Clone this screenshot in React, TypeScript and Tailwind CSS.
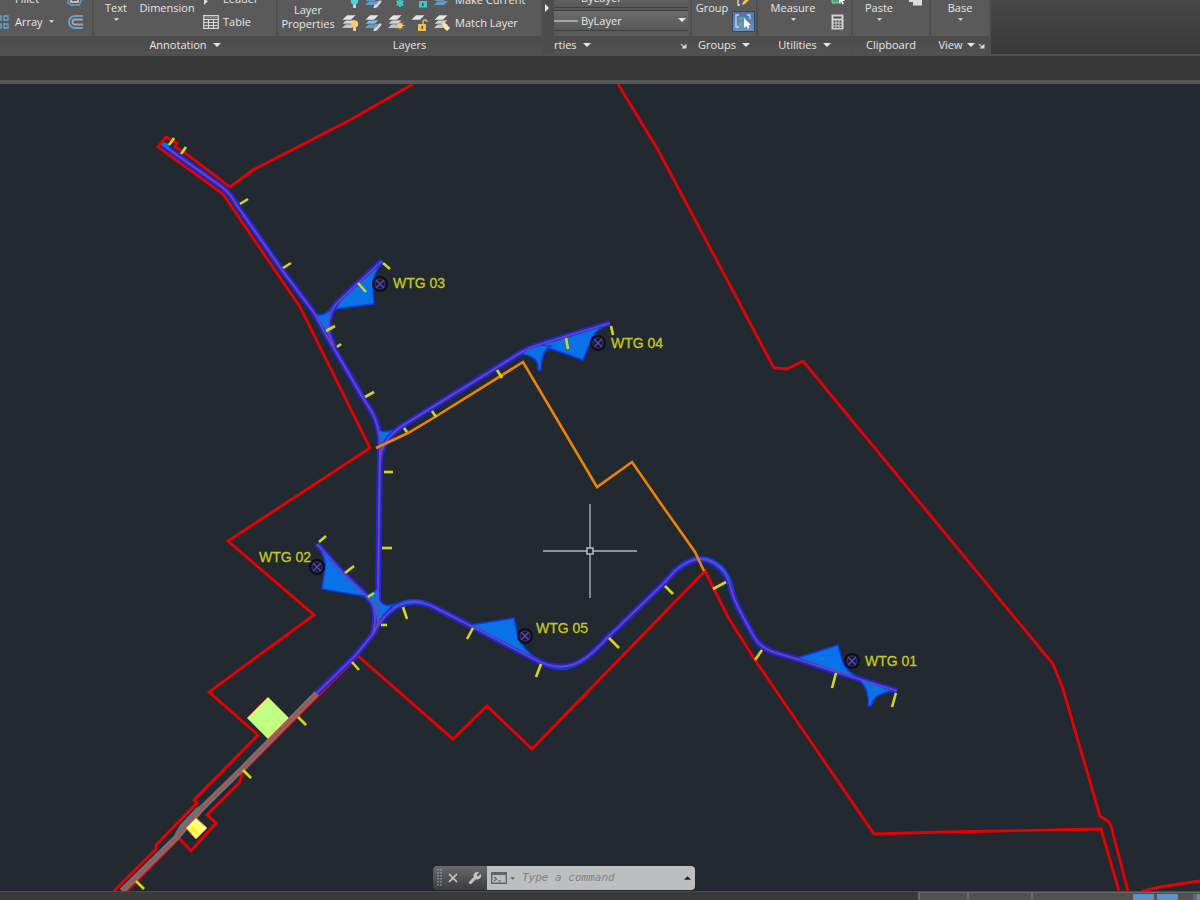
import React from 'react';
import { Wrench, X } from 'lucide-react';

type Tint = 'gray' | 'blue';
type Badge = 'bulb' | 'bulbOn' | 'brush' | 'sun' | 'lock' | 'lockOn' | 'match' | 'flake' | 'none';

const CaretDown: React.FC<{ small?: boolean }> = ({ small }) => (
  <svg viewBox="0 0 8 4" className={small ? 'w-[5px] h-[3px]' : 'w-2 h-1'} aria-hidden="true">
    <path d="M0 0h8L4 4z" fill="#e6e6e6" />
  </svg>
);

const Launcher: React.FC = () => (
  <button aria-label="Panel settings" className="w-[7px] h-[7px]">
    <svg viewBox="0 0 7 7" className="w-[7px] h-[7px]">
      <path d="M1 2l3 3" stroke="#c8c8c8" strokeWidth="1.200" />
      <path d="M6.500 1.500v5h-5z" fill="#d8d8d8" />
    </svg>
  </button>
);

const badges: Record<Badge, React.ReactNode> = {
  bulb: (
    <>
      <circle cx="12.500" cy="10" r="3.700" fill="#f6cb6a" />
      <path d="M11.200 13.400h2.600V17h-2.600z" fill="#ddd" />
    </>
  ),
  bulbOn: (
    <>
      <circle cx="12.500" cy="10" r="3.700" fill="#46d6e2" />
      <path d="M11.200 13.400h2.600V17h-2.600z" fill="#ddd" />
    </>
  ),
  brush: <path d="M8.500 17c0-2.500 1-3.500 3-4L15 9l1.700 1.500-3.200 4C12.500 16.500 11 17 8.500 17z" fill="#d5dbe0" />,
  sun: (
    <>
      <path d="M12 7v9M7.500 11.500h9M9 8.500l6 6M15 8.500l-6 6" stroke="#e5b455" strokeWidth="1" />
      <circle cx="12" cy="11.500" r="2.600" fill="#f8cf70" />
    </>
  ),
  lock: (
    <>
      <path d="M7 10h8v7H7z" fill="#f2bd52" />
      <path d="M12 10V8q0-2 2-2t2 2" fill="none" stroke="#f2bd52" strokeWidth="1.400" />
      <path d="M10.500 12H12v3h-1.500z" fill="#5a4a2a" />
    </>
  ),
  lockOn: (
    <>
      <path d="M8 10h8v6.500H8z" fill="#3bc5d0" />
      <path d="M11 12h1.500v3H11z" fill="#1d5a60" />
    </>
  ),
  match: <path d="M7 9l3-1 6 6-3 3-4-4z" fill="#f0e8d0" stroke="#d8b060" strokeWidth=".8" />,
  flake: (
    <>
      <path d="M12 8v8M8.500 10l7 4M15.500 10l-7 4" stroke="#3bc5d0" strokeWidth="2" />
      <circle cx="12" cy="12" r="3" fill="#3bc5d0" />
    </>
  ),
  none: null,
};

const LayerIcon: React.FC<{ tint?: Tint; badge: Badge; single?: boolean }> = ({ tint = 'gray', badge, single }) => (
  <svg viewBox="0 0 17 17" className="w-[17px] h-[17px]" aria-hidden="true">
    {!single && <path d="M0 14l4-4h10l-4 4z" fill={tint === 'blue' ? '#5d9fd3' : '#c4c4c4'} />}
    {!single && <path d="M0 10l4-4h10l-4 4z" fill={tint === 'blue' ? '#86bde6' : '#d4d4d4'} stroke="#555" strokeWidth=".7" />}
    <path d="M0 6l5-5h9l-5 5z" fill="#e4e4e4" stroke="#555" strokeWidth=".5" />
    {badges[badge]}
  </svg>
);

interface PanelProps {
  title?: string;
  menu?: boolean;
  launcher?: boolean;
  className: string;
  children: React.ReactNode;
}

const Panel: React.FC<PanelProps> = ({ title, menu, launcher, className, children }) => (
  <section className={`flex flex-col shrink-0 border-r-2 border-[#4f4f4f] ${className}`}>
    <div className="flex items-end h-9 bg-[#5a5a5a] overflow-hidden">{children}</div>
    <div className="flex items-center h-[18px] px-1 bg-linear-to-b from-[#4b4b4b] to-[#525252]">
      <div className={`flex-1 flex items-center justify-center ${launcher ? 'gap-1' : 'gap-[6px]'}`}>
        {title}
        {menu && <CaretDown />}
      </div>
      {launcher && <Launcher />}
    </div>
  </section>
);

const BigButton: React.FC<{ label: string; caret?: boolean; className: string }> = ({ label, caret, className }) => (
  <button className={`flex flex-col items-center shrink-0 pb-[13px] ${className}`}>
    <span className="leading-[14px]">{label}</span>
    <span className="flex items-center h-2">{caret && <CaretDown small />}</span>
  </button>
);

const row = 'flex items-center h-[23px]';

const LineSelect: React.FC<{ label: string }> = ({ label }) => (
  <div className="relative flex items-center shrink-0 h-[21px] border-y border-[#404040] bg-linear-to-b from-[#6c6c6c] to-[#595959]">
    <span className="w-6 h-[2px] shrink-0 bg-[#a6a6a6]" />
    <select aria-label={label} className="flex-1 h-[19px] pl-[3px] appearance-none bg-transparent text-[#e8e8e8] outline-none">
      <option>ByLayer</option>
    </select>
    <span className="absolute right-[2px] top-[7px] flex pointer-events-none"><CaretDown /></span>
  </div>
);

const Ribbon: React.FC = () => (
  <header className="flex h-[54px] overflow-hidden bg-linear-to-b from-[#484848] to-[#393939]">
    <Panel className="w-[94px]">
      <div className="flex flex-col shrink-0 w-[67px] pb-[3px]">
        <button className={`${row} pl-[15px]`}>Fillet</button>
        <button className={`${row} gap-[6px]`}>
          <svg viewBox="0 0 9 14" className="w-[9px] h-[14px]" aria-hidden="true">
            <path d="M-4 1h5v4h-5zM4 1h4v4H4zM4 9h4v4H4zM-4 9h5v4h-5z" fill="none" stroke="#62a5d0" strokeWidth="1.400" />
          </svg>
          Array
          <CaretDown small />
        </button>
      </div>
      <div className="flex flex-col shrink-0 pb-[3px]">
        <button className={row} aria-label="Explode">
          <svg viewBox="0 0 16 14" className="w-4 h-[14px]">
            <path d="M1 3v8l3 2h8l3-6V3" fill="none" stroke="#62a5d0" strokeWidth="1.400" />
            <path d="M4 2v8h7V2" fill="none" stroke="#ddd" strokeWidth="1.400" />
          </svg>
        </button>
        <button className={row} aria-label="Offset">
          <svg viewBox="0 0 16 14" className="w-4 h-[14px]" fill="none">
            <path d="M16 1H8a6 6 0 0 0 0 12h8" stroke="#62a5d0" strokeWidth="1.800" />
            <path d="M16 4.500H8a2.500 2.500 0 0 0 0 5h8" stroke="#a5a5a5" strokeWidth="1.800" />
          </svg>
        </button>
      </div>
    </Panel>

    <Panel title="Annotation" menu className="w-[184px]">
      <BigButton label="Text" caret className="w-[44px]" />
      <BigButton label="Dimension" className="w-[58px]" />
      <div className="flex flex-col shrink-0 pb-[3px] pl-[7px]">
        <button className={`${row} gap-1`}>
          <svg viewBox="0 0 16 14" className="w-4 h-[14px]" aria-hidden="true">
            <path d="M1 13V7l4 2z" fill="#ddd" />
          </svg>
          Leader
        </button>
        <button className={`${row} gap-1`}>
          <svg viewBox="0 0 16 14" className="w-4 h-[14px]" fill="none" aria-hidden="true">
            <path d="M.7.7h14.600v12.600H.7zM.7 4.500h14.600M.7 7.500h14.600M.7 10.500h14.600M5.500 4.500v9M10.500 4.500v9" stroke="#d6d6d6" strokeWidth="1.200" />
            <path d="M1 2.500h14" stroke="#888" strokeWidth="1.500" />
          </svg>
          Table
        </button>
      </div>
    </Panel>

    <Panel title="Layers" className="w-[265px]">
      <button className="flex flex-col items-center shrink-0 w-[60px] pb-[5px] leading-[14px]">
        <span>Layer</span>
        <span>Properties</span>
      </button>
      <div className="flex flex-col shrink-0 pl-1 pb-[2px]">
        <div className={`${row} gap-[6px]`}>
          <LayerIcon single badge="bulbOn" />
          <LayerIcon tint="blue" badge="brush" />
          <LayerIcon single badge="flake" />
          <LayerIcon single badge="lockOn" />
          <button className="flex items-center gap-1 whitespace-nowrap">
            <LayerIcon tint="blue" badge="none" />
            Make Current
          </button>
        </div>
        <div className={`${row} gap-[6px]`}>
          <LayerIcon badge="bulb" />
          <LayerIcon tint="blue" badge="brush" />
          <LayerIcon badge="sun" />
          <LayerIcon single badge="lock" />
          <button className="flex items-center gap-1 whitespace-nowrap">
            <LayerIcon badge="match" />
            Match Layer
          </button>
        </div>
      </div>
    </Panel>

    <button aria-label="More panels" className="flex items-start shrink-0 w-[11px] pt-1 pl-[2px] bg-[#4c4c4c]">
      <svg viewBox="0 0 4 8" className="w-1 h-2"><path d="M0 0l4 4-4 4z" fill="#f0f0f0" /></svg>
    </button>

    <section className="flex flex-col shrink-0 w-[138px] border-r-2 border-[#4f4f4f]">
      <div className="flex flex-col justify-end h-9 pb-[5px] pr-[2px] gap-[2px] bg-[#5a5a5a]">
        <LineSelect label="Lineweight" />
        <LineSelect label="Linetype" />
      </div>
      <div className="flex items-center h-[18px] pr-[3px] gap-[6px] bg-linear-to-b from-[#4b4b4b] to-[#525252]">
        rties
        <CaretDown />
        <span className="flex-1" />
        <Launcher />
      </div>
    </section>

    <Panel title="Groups" menu className="w-[66px]">
      <BigButton label="Group" className="w-10" />
      <div className="flex flex-col shrink-0 pb-1">
        <button className={`${row} justify-center`} aria-label="Group edit">
          <svg viewBox="0 0 16 14" className="w-4 h-[14px]">
            <path d="M4 2H2v10h2" fill="none" stroke="#ddd" strokeWidth="1.300" />
            <path d="M6 12l1-3 6-6 2 2-6 6z" fill="#f1c565" />
          </svg>
        </button>
        <button aria-label="Group selection" className="flex items-center justify-center w-[23px] h-[21px] border border-[#2f466b] bg-linear-to-b from-[#4f74aa] to-[#6f90bd]">
          <svg viewBox="0 0 17 15" className="w-[17px] h-[15px]">
            <path d="M4 1H1v12h3M12 1h3v4" fill="none" stroke="#c8d6e6" strokeWidth="1.300" />
            <path d="M4 3h6v3H4zM4 8h5v4H4z" fill="#4fb08c" />
            <path d="M9 4v10l2.300-2 1.700 3 1.500-1-1.500-2.800H16z" fill="#fff" />
          </svg>
        </button>
      </div>
    </Panel>

    <Panel title="Utilities" menu className="w-[95px]">
      <BigButton label="Measure" caret className="w-[70px]" />
      <div className="flex flex-col shrink-0 pb-[3px] pl-[3px]">
        <button className={row} aria-label="Quick select">
          <svg viewBox="0 0 15 14" className="w-[15px] h-[14px]">
            <path d="M1 1h9v10H1z" fill="#4fa873" stroke="#8fd0a5" />
            <path d="M8 2v9l2-1.500 1.500 3 1.500-1-1.500-2.500H14z" fill="#fff" />
          </svg>
        </button>
        <button className={row} aria-label="Quick calculator">
          <svg viewBox="0 0 13 16" className="w-[13px] h-4">
            <path d="M.5.5h12v15H.5z" fill="#d2d2d2" />
            <path d="M2.500 2.500h8v2h-8zM2.500 6.500h2v2h-2zM5.500 6.500h2v2h-2zM8.500 6.500h2v2h-2zM2.500 9.500h2v2h-2zM5.500 9.500h2v2h-2zM8.500 9.500h2v2h-2zM2.500 12.500h2v1.500h-2zM5.500 12.500h2v1.500h-2zM8.500 12.500h2v1.500h-2z" fill="#505050" />
          </svg>
        </button>
      </div>
    </Panel>

    <Panel title="Clipboard" className="w-[78px]">
      <BigButton label="Paste" caret className="w-[52px]" />
      <button aria-label="Copy" className="self-start shrink-0 pl-1">
        <svg viewBox="0 0 14 6" className="w-[14px] h-[6px]">
          <path d="M0 0h10v2H0zM4 0h9v5.500H4z" fill="#dcdcdc" />
        </svg>
      </button>
    </Panel>

    <Panel title="View" menu launcher className="w-[60px]">
      <BigButton label="Base" caret className="w-[58px]" />
    </Panel>
  </header>
);

// Site drawing, in sheet units
const boundaries = [
  'M413 84L350 120L253 170L230 187L185 153L175 147L177 143L166 137L158 147L223 194L300 307L370 448L228 541L314 615L209 692L258 735L194 800L197 803L156 845V849L114 891',
  'M127 891L179 838L191 851L216 823L207 815L239 783L244 770L358 656L453 739L487 706L532 749L705 571L728 617L755 660L796 720L874 834L945 832L1101 829L1119 891',
  'M618 84L658 150L774 368L787 369L803 361L1053 664L1063 689L1100 816L1109 822L1111 826L1128 891',
  'M1142 891L1160 887L1200 881',
];

const orangeLine = 'M376 448L408 433L435 417L523 362L597 487L632 462L659 501L695 552L704 571';

const roads = [
  'M163 145L222 187Q230 193 238 207L282 270L312 310Q317 317 325 333L363 398L372 412Q380 427 380 445L379 520L378 600V622Q377 630 368 640L355 656L317 693',
  'M382 261L340 300Q331 308 329 320V334L334 346',
  'M380 462Q380 441 402 426L520 353Q528 348 538 345L567 336L610 323',
  'M317 544L343 573L368 597Q379 609 373 633',
  'M372 635Q383 615 396 607Q415 598 434 607L473 627L538 661Q565 674 587 657Q595 651 607 638L663 584L675 571Q700 549 720 568Q728 575 732 592Q734 600 742 615L753 635Q759 647 773 652L797 659L837 672L897 691',
];

const pads = [
  // WTG 03
  'M335 309L374 304L373 287Q372 277 381 263L340 301z',
  'M314 313Q323 319 332 307Q328 318 330 335L327 334z',
  // WTG 04
  'M540 345L583 360L592 338Q596 329 609 324L567 337z',
  'M522 354Q540 357 538 370H541Q541 351 551 346L540 345L528 349z',
  'M376 428Q385 436 400 426Q383 437 381 449Q380 436 376 428z',
  // WTG 02
  'M318 546Q327 560 325 568L322 589L363 596L368 597L343 573z',
  'M363 596Q374 595 378 587L380 600Q384 609 397 603Q383 612 376 628Q378 607 363 596z',
  // WTG 05
  'M390 608Q413 592 434 606Q412 598 394 609z',
  'M470 625L514 618L518 637Q523 650 540 661z',
  'M543 664Q565 678 589 657Q570 674 543 664z',
  'M673 571Q700 545 723 567Q732 577 734 592Q731 580 721 570Q699 549 674 573z',
  // WTG 01
  'M797 658L838 645L842 660Q845 671 860 679L837 672z',
  'M856 677Q870 688 868 706H871Q874 693 893 691z',
];

const ticks = [
  'M169 145l5-7', 'M181 154l5-7', 'M240 204l8-5', 'M283 268l8-5', 'M383 263l7 6', 'M358 283l8 9',
  'M326 331l9-5', 'M337 347l4-3', 'M365 397l9-5', 'M404 428l3 4', 'M432 411l4 6', 'M497 370l5 8',
  'M611 326l2 9', 'M566 338l2 11', 'M384 472h9', 'M319 542l7-6', 'M345 573l9-7', 'M368 597l6-4',
  'M382 548h10', 'M381 625h6', 'M403 607l4 12', 'M473 628l-6 11', 'M541 664l-5 13', 'M352 662l7 8',
  'M609 638l10 10', 'M665 586l8 8', 'M726 582l-13 7', 'M762 650l-7 10', 'M836 673l-4 15', 'M896 693l-4 14',
  'M298 717l8 8', 'M243 770l8 8', 'M136 881l8 8',
];

const turbines = [
  { name: 'WTG 01', cx: 852, cy: 661, x: 865, y: 666 },
  { name: 'WTG 02', cx: 317, cy: 567, x: 259, y: 562 },
  { name: 'WTG 03', cx: 380, cy: 284, x: 393, y: 288 },
  { name: 'WTG 04', cx: 598, cy: 343, x: 611, y: 348 },
  { name: 'WTG 05', cx: 525, cy: 636, x: 536, y: 633 },
];

const SiteDrawing: React.FC = () => (
  <svg viewBox="0 84 1200 807" className="block w-full h-auto bg-[#222930]" fill="none">
    <g stroke="#ea0000" strokeWidth="2.800">
      {boundaries.map((d) => <path key={d} d={d} />)}
    </g>

    {/* Access track */}
    <path d="M317 693L243 768L203 807L177 837L122 891" stroke="#777172" strokeWidth="6" />
    <path d="M204 803L196 808L180 825L174 835L190 824z" fill="#6c7072" />
    <path d="M317 693L243 768L203 807L177 837L122 891" stroke="#b24e4e" strokeWidth="1.500" />

    <path d="M268 697L289 718L268 739L247 718z" fill="#c0ff80" stroke="#e06030" strokeWidth="1" />
    <path d="M196 818L207 828L196 839L186 828z" fill="#ffff7c" stroke="#f09040" strokeWidth="1" />
    <path d="M191 827l7 7" stroke="#fff02c" strokeWidth="4" />

    <g stroke="#1428ee" strokeWidth="6">
      {roads.map((d) => <path key={d} d={d} />)}
    </g>
    <g stroke="#3c34c8" strokeWidth="2.600">
      {roads.map((d) => <path key={d} d={d} />)}
    </g>
    <g fill="#0872e6" stroke="#1038ee" strokeWidth="1.500">
      {pads.map((d) => <path key={d} d={d} />)}
    </g>
    <g stroke="#84409c" strokeWidth="1.600">
      {roads.map((d) => <path key={d} d={d} />)}
    </g>
    <path d="M161 145l3-3 5 2 0 6z" fill="#0872e6" />

    <path d={orangeLine} stroke="#ee8208" strokeWidth="2.600" />

    <g stroke="#d6d620" strokeWidth="2.600">
      {ticks.map((d) => <path key={d} d={d} />)}
    </g>

    {turbines.map((t) => (
      <g key={t.name}>
        <circle cx={t.cx} cy={t.cy} r="7" fill="#18182e" stroke="#0d0d1c" strokeWidth="2" />
        <circle cx={t.cx} cy={t.cy} r="5" stroke="#37346e" strokeWidth="1" />
        <path
          d={`M${t.cx - 4} ${t.cy - 4}l8 8M${t.cx + 4} ${t.cy - 4}l-8 8`}
          stroke="#514da8"
          strokeWidth="1.500"
        />
        <text
          x={t.x}
          y={t.y}
          fill="#c8c820"
          stroke="#c8c820"
          strokeWidth=".3"
          className="text-[14px] font-['Liberation_Sans',sans-serif]"
        >
          {t.name}
        </text>
      </g>
    ))}

    {/* Cursor */}
    <path d="M543 551h44M593 551h44M590 504v44M590 554v44" stroke="#8f9397" strokeWidth="1.800" />
    <path d="M587 548h6v6h-6z" stroke="#b9bbbd" strokeWidth="1.500" />
  </svg>
);

const CommandLine: React.FC = () => (
  <div className="absolute bottom-px left-[433px] flex w-[262px] h-6">
    <div className="flex items-center w-[54px] gap-2 pl-1 rounded-l-sm bg-linear-to-b from-[#6a6a6c] to-[#3c3c3e]">
      <svg viewBox="0 0 5 18" className="w-[5px] h-[18px]" aria-hidden="true">
        <path d="M1 0v18M4 0v18" stroke="#9a9a9a" strokeWidth="1.500" strokeDasharray="1.500 1.500" />
      </svg>
      <button aria-label="Close" className="-ml-1"><X size={14} color="#c8c8c8" strokeWidth={3} /></button>
      <button aria-label="Customize"><Wrench size={14} color="#c8c8c8" fill="#c8c8c8" strokeWidth={1} /></button>
    </div>
    <div className="flex flex-1 items-center min-w-0 pl-1 pr-1 bg-[#bdbec0] rounded-r-sm">
      <button aria-label="Recent commands" className="flex items-center gap-[3px]">
        <svg viewBox="0 0 16 12" className="w-4 h-3">
          <path d="M.7.7h14.600v10.600H.7z" fill="none" stroke="#606264" strokeWidth="1.400" />
          <path d="M0 0h16v3H0z" fill="#606264" />
          <path d="M3 5l2.500 2L3 9M7 9h3" fill="none" stroke="#606264" strokeWidth="1.200" />
        </svg>
        <svg viewBox="0 0 6 3" className="w-[5px] h-[3px]"><path d="M0 0h6L3 3z" fill="#606264" /></svg>
      </button>
      <input
        aria-label="Command"
        placeholder="Type a command"
        className="flex-1 min-w-0 pl-[7px] text-[11px] italic font-['DejaVu_Sans_Mono',monospace] placeholder:text-[#808285] bg-transparent outline-none"
      />
      <button aria-label="Command history">
        <svg viewBox="0 0 8 4" className="w-[7px] h-1"><path d="M0 4h8L4 0z" fill="#1c1c1c" /></svg>
      </button>
    </div>
  </div>
);

const statusCell = 'shrink-0 h-6 border-l-2 border-[#6a6a6a] bg-[#515151]';

const StatusBar: React.FC = () => (
  <footer className="flex justify-end items-start h-[9px] overflow-hidden border-t border-[#4c4c4c] bg-[#3a3a3a]">
    <div className="flex border-t border-[#686868]">
      <button aria-label="Coordinates" className={`${statusCell} w-[49px]`} />
      <button aria-label="Grid" className={`${statusCell} w-16 pl-[6px]`}>
        <svg viewBox="0 0 40 16" className="w-10 h-4" stroke="#b8b8b8">
          <path d="M2 4v12M6 4v12M10 4v12M23 6h3M28 6h3M33 6h3" fill="none" strokeWidth="1.500" />
        </svg>
      </button>
      <button aria-label="Ortho" className={`${statusCell} w-[102px] pl-1`}>
        <svg viewBox="0 0 76 16" className="w-[76px] h-4" fill="none" strokeWidth="1.500">
          <path d="M2 4v12M26 7q5-4 10 0" stroke="#b8b8b8" />
          <path d="M62 7l3-2" stroke="#c04040" />
          <path d="M69 4v12" stroke="#50a060" />
        </svg>
      </button>
      <div className="flex shrink-0 gap-[3px] pt-px bg-[#515151]">
        <button aria-label="Object snap" className="w-[21px] h-6 bg-[#5b90c8]">
          <svg viewBox="0 0 21 16" className="w-[21px] h-4"><path d="M11 6l4-3v4z" fill="#e8f0f8" /></svg>
        </button>
        <button aria-label="Lineweight display" className="w-[21px] h-6 bg-[#5b90c8]">
          <svg viewBox="0 0 21 16" className="w-[21px] h-4" fill="none" stroke="#e8f0f8" strokeWidth="1.500">
            <path d="M3 12V4h4v8M9 5h9" />
          </svg>
        </button>
        <span className="w-[9px]" />
        <button aria-label="Annotation scale" className="w-[7px] h-6 border-l-4 border-[#6a6a6a] bg-[#5b90c8]" />
      </div>
    </div>
  </footer>
);

const App: React.FC = () => (
  <div className="flex flex-col bg-[#222930] text-[11px] leading-4 text-[#e8e8e8] font-['Open_Sans',sans-serif]">
    <Ribbon />
    <div className="h-[30px] border-t-2 border-b-4 border-t-[#505050] border-b-[#585858] bg-[#383838]" />
    <main className="relative">
      <SiteDrawing />
      <CommandLine />
    </main>
    <StatusBar />
  </div>
);

export default App;
